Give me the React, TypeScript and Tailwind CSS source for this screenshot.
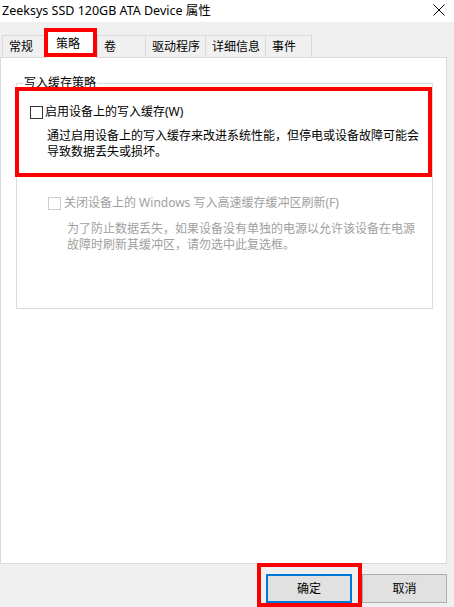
import React from "react";

const tabBase =
  "h-[22px] border-t border-l border-[#d9d9d9] bg-[#f0f0f0] pl-[6px] flex items-center shrink-0";

export default function App() {
  return (
    <div className="relative w-[454px] h-[607px] bg-[#f0f0f0] overflow-hidden font-['Noto_Sans','Noto_Sans_CJK_SC',sans-serif] text-[12px] text-black">
      {/* title bar */}
      <div className="h-[22px] bg-white flex items-center justify-between pl-[2px] pr-[9px]">
        <span className="text-[12.5px] leading-[16px]">Zeeksys SSD 120GB ATA Device 属性</span>
        <svg width="12" height="12" viewBox="0 0 12 12" className="mt-[-2px]">
          <path d="M0.5 0.5 L11.5 11.5 M11.5 0.5 L0.5 11.5" stroke="#000" strokeWidth="1" fill="none" />
        </svg>
      </div>

      {/* tabs */}
      <div className="mt-[13px] pl-[2px] flex items-end h-[22px]">
        <div className={`${tabBase} w-[43px]`}>常规</div>
        <div className="relative z-10 h-[27px] -mb-px w-[52px] bg-white border border-b-0 border-[#d9d9d9] pl-[10px] flex items-center pb-[3px] shrink-0">
          策略
        </div>
        <div className={`${tabBase} w-[48px]`}>卷</div>
        <div className={`${tabBase} w-[60px]`}>驱动程序</div>
        <div className={`${tabBase} w-[60px]`}>详细信息</div>
        <div className={`${tabBase} w-[47px] border-r`}>事件</div>
      </div>

      {/* panel */}
      <div className="w-[447px] h-[507px] bg-white border border-[#d9d9d9] pt-[25px] pl-[15px]">
        <div className="relative w-[417px] h-[226px] border border-[#dcdcdc] pt-[20px]">
          <span className="absolute -top-[9px] left-[6px] bg-white px-[1px] leading-[16px]">写入缓存策略</span>

          <div className="flex items-center h-[16px] pl-[13px]">
            <div className="w-[13px] h-[13px] border border-[#333] bg-white shrink-0" />
            <span className="ml-[2px] leading-[16px]">启用设备上的写入缓存(W)</span>
          </div>
          <div className="mt-[8px] ml-[30px] w-[378px] leading-[16px]">
            通过启用设备上的写入缓存来改进系统性能，但停电或设备故障可能会导致数据丢失或损坏。
          </div>

          <div className="mt-[35px] flex items-center h-[16px] pl-[31px] text-[#a0a0a0]">
            <div className="w-[13px] h-[13px] border border-[#cccccc] bg-white shrink-0" />
            <span className="ml-[3px] leading-[16px]">关闭设备上的 Windows 写入高速缓存缓冲区刷新(F)</span>
          </div>
          <div className="mt-[10px] ml-[50px] w-[355px] leading-[16px] text-[#a0a0a0]">
            为了防止数据丢失，如果设备没有单独的电源以允许该设备在电源故障时刷新其缓冲区，请勿选中此复选框。
          </div>
        </div>
      </div>

      {/* buttons */}
      <div className="mt-[10px] flex justify-end gap-[10px] pr-[7px]">
        <button className="w-[86px] h-[29px] border-2 border-[#0078d7] bg-[#e1e1e1] flex items-center justify-center">
          确定
        </button>
        <button className="w-[85px] h-[29px] border border-[#adadad] bg-[#e1e1e1] flex items-center justify-center">
          取消
        </button>
      </div>

      {/* red annotation boxes */}
      <div className="absolute left-[44px] top-[28px] w-[53px] h-[29px] border-4 border-[#ff0000] z-20" />
      <div className="absolute left-[15px] top-[87px] w-[417px] h-[90px] border-4 border-[#ff0000] z-20" />
      <div className="absolute left-[257px] top-[563px] w-[105px] h-[44px] border-4 border-[#ff0000] z-20" />
    </div>
  );
}
